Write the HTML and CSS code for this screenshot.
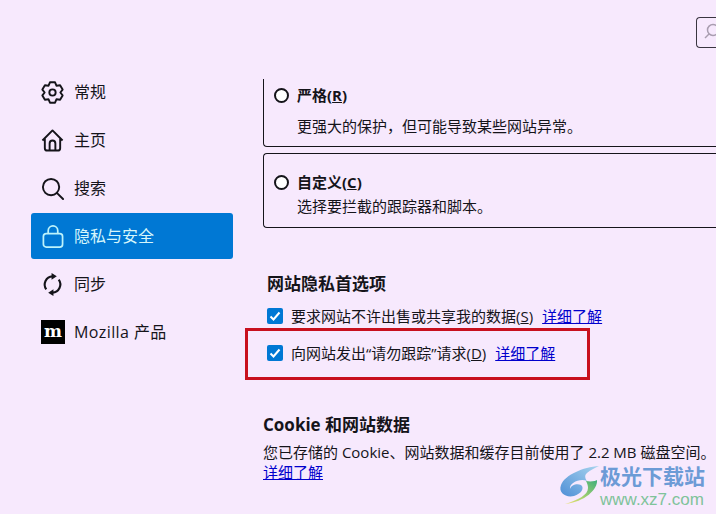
FILE: index.html
```html
<!DOCTYPE html>
<html lang="zh-CN">
<head>
  <meta charset="UTF-8" />
  <title>设置</title>
  <link rel="stylesheet" href="styles.css">
</head>
<body>
  <div class="topbar">
    <div class="search-box">
      <svg width="14" height="20" viewBox="0 0 14 20" fill="none" stroke="#a99db0" stroke-width="1.5"><circle cx="11" cy="7" r="5.5"/><path d="M7 11l-4 4"/></svg>
    </div>
  </div>

  <div class="layout">
    <nav class="sidebar">
      <a class="nav-item">
        <svg class="icon" viewBox="0 0 24 24" fill="none" stroke="#15141a" stroke-width="2" stroke-linejoin="round"><path d="M16.100 4.900L14.660 1.330H9.340L7.900 4.900 4.090 4.360 1.430 8.970 3.800 12 1.430 15.030 4.090 19.640 7.900 19.100 9.340 22.670H14.660L16.100 19.100 19.910 19.640 22.570 15.030 20.200 12 22.570 8.970 19.910 4.360z"/><circle cx="12" cy="12" r="3.300"/></svg>
        <span>常规</span>
      </a>
      <a class="nav-item">
        <svg class="icon" viewBox="0 0 24 24" fill="none" stroke="#15141a" stroke-width="2" stroke-linejoin="round"><path d="M1.500 12L12 1.500 22.500 12M4 9.500V20a2.500 2.500 0 0 0 2.500 2.500h11A2.500 2.500 0 0 0 20 20V9.500"/><path d="M9 22.500V15a3 3 0 0 1 6 0v7.500"/></svg>
        <span>主页</span>
      </a>
      <a class="nav-item">
        <svg class="icon" viewBox="0 0 24 24" fill="none" stroke="#15141a" stroke-width="2" stroke-linecap="round"><circle cx="10.500" cy="10.500" r="8.500"/><path d="M16.500 16.500l6.500 6.500"/></svg>
        <span>搜索</span>
      </a>
      <a class="nav-item active">
        <svg class="icon" viewBox="0 0 24 24" fill="none" stroke="#bdf3fb" stroke-width="1.800"><rect x="2.500" y="9" width="20" height="14" rx="3"/><path d="M7.500 9V6a5 5 0 0 1 10 0v3"/></svg>
        <span>隐私与安全</span>
      </a>
      <a class="nav-item">
        <svg class="icon" viewBox="0 0 24 24" fill="none" stroke="#15141a" stroke-width="2.200"><path d="M5.500 17A8.500 8.500 0 0 1 12 3.500"/><path d="M18.500 7A8.500 8.500 0 0 1 12 20.500"/><path d="M11 0l5.500 3.500L11 7z" fill="#15141a" stroke="none"/><path d="M13 24l-5.500-3.500L13 17z" fill="#15141a" stroke="none"/></svg>
        <span>同步</span>
      </a>
      <a class="nav-item">
        <span class="moz-logo">m</span>
        <span class="moz-name">Mozilla 产品</span>
      </a>
    </nav>

    <main class="content">
      <div class="card card-clipped">
        <div class="radio-row"><span class="radio"></span><b>严格(<u>R</u>)</b></div>
        <p class="card-desc strict-desc">更强大的保护，但可能导致某些网站异常。</p>
      </div>
      <div class="card card-custom">
        <div class="radio-row"><span class="radio"></span><b>自定义(<u>C</u>)</b></div>
        <p class="card-desc">选择要拦截的跟踪器和脚本。</p>
      </div>

      <section class="prefs">
        <h3>网站隐私首选项</h3>
        <div class="check-row">
          <span class="check"><svg width="12" height="12" viewBox="0 0 12 12" fill="none" stroke="#fff" stroke-width="2"><path d="M1.500 6.500l3 3 6-7"/></svg></span>
          <span>要求网站不许出售或共享我的数据(<u>S</u>)</span>
          <a class="link">详细了解</a>
        </div>
        <div class="check-row">
          <span class="check"><svg width="12" height="12" viewBox="0 0 12 12" fill="none" stroke="#fff" stroke-width="2"><path d="M1.500 6.500l3 3 6-7"/></svg></span>
          <span>向网站发出“请勿跟踪”请求(<u>D</u>)</span>
          <a class="link">详细了解</a>
        </div>
      </section>

      <section class="cookies">
        <h2>Cookie 和网站数据</h2>
        <p>您已存储的 Cookie、网站数据和缓存目前使用了 2.2 MB 磁盘空间。</p>
        <a class="link">详细了解</a>
      </section>
    </main>
  </div>

  <div class="red-box"></div>

  <div class="watermark">
    <svg class="wm-logo" width="44" height="42" viewBox="0 0 44 42">
      <defs>
        <linearGradient id="wmBlue" x1="1" y1="0" x2="0" y2="1"><stop offset="0" stop-color="#a8d4ee"/><stop offset="1" stop-color="#4f8fd6"/></linearGradient>
        <linearGradient id="wmGreen" x1="1" y1="0" x2="0" y2="1"><stop offset="0" stop-color="#3fae7c"/><stop offset="0.6" stop-color="#a9d26e"/><stop offset="1" stop-color="#f3e27a"/></linearGradient>
      </defs>
      <path d="M41 2C25 3 7 11 3 21c-3 8 5 13 13 11 7-2 11-8 7-11-4-2-10 0-11 4-1-6 10-11 17-8 0 0-4-5 0-8 3-3 8-5 12-7z" fill="url(#wmBlue)"/>
      <path d="M28 17c5 1 10 0 11-1 1 9-12 22-32 24 13-4 23-9 23-16 0-3-1-5-2-7z" fill="url(#wmGreen)"/>
    </svg>
    <div class="wm-text">
      <span class="wm-title">极光下载站</span>
      <span class="wm-url">www.xz7.com</span>
    </div>
  </div>
</body>
</html>
```

FILE: styles.css
```css
html, body {
  height: 100%;
}

body {
  position: relative;
  margin: 0;
  overflow: hidden;
  background-color: #f7e9fd;
  color: #15141a;
  font-family: "Open Sans", "Noto Sans CJK SC", sans-serif;
  font-size: 15px;
  line-height: 20px;
}

.topbar {
  height: 17px;
  padding: 17px 0 0 696px;
}

.search-box {
  box-sizing: border-box;
  width: 20px;
  height: 31px;
  border: 1px solid #3a3540;
  border-right: 0;
  border-radius: 4px 0 0 4px;
  padding: 5px 0 0 5px;
}

.layout {
  display: flex;
  padding-top: 35px;
}

.sidebar {
  flex: none;
  width: 202px;
  margin-left: 31px;
  display: flex;
  flex-direction: column;
  gap: 2px;
}

.nav-item {
  display: flex;
  align-items: center;
  gap: 10px;
  height: 46px;
  padding-left: 10px;
  border-radius: 3px;
  font-size: 16px;
}

.nav-item.active {
  background-color: #0078d4;
  color: #d6f6fb;
}

.icon {
  flex: none;
  width: 23px;
  height: 23px;
}

.moz-logo {
  flex: none;
  width: 24px;
  height: 24px;
  margin-right: -1px;
  background: #000;
  color: #fff;
  font-family: "DejaVu Serif", serif;
  font-size: 17px;
  font-weight: 700;
  line-height: 22px;
  text-align: center;
}

.moz-name {
  letter-spacing: 0.4px;
}

.content {
  flex: 1;
  min-width: 0;
  margin-left: 30px;
  margin-top: 10px;
}

.card {
  box-sizing: border-box;
  border: 1px solid #15141a;
  border-right: 0;
  border-radius: 4px 0 0 4px;
}

.card-clipped {
  height: 68px;
  border-top: 0;
  border-top-left-radius: 0;
  padding-top: 6px;
}

.card-custom {
  height: 75px;
  margin-top: 6px;
  padding-top: 18px;
}

.radio-row {
  display: flex;
  align-items: center;
  gap: 8px;
  padding-left: 10px;
}

.radio {
  flex: none;
  box-sizing: border-box;
  width: 15px;
  height: 15px;
  border: 2px solid #15141a;
  border-radius: 50%;
  background: #fff;
}

.card-desc {
  margin: 4px 0 0 33px;
}

.strict-desc {
  margin-top: 11px;
}

.prefs {
  margin-top: 44px;
  padding-left: 4px;
}

.prefs h3 {
  margin: 0 0 8px;
  font-size: 17px;
  font-weight: 700;
  line-height: 24px;
}

.check-row {
  display: flex;
  align-items: center;
  height: 24px;
  margin-bottom: 13px;
}

.check {
  flex: none;
  display: flex;
  align-items: center;
  justify-content: center;
  width: 16px;
  height: 16px;
  margin-right: 8px;
  border-radius: 2px;
  background-color: #0078d4;
}

.link {
  margin-left: 9px;
  color: #0000cc;
  text-decoration: underline;
}

.cookies {
  margin-top: 48px;
}

.cookies h2 {
  margin: 0 0 5px;
  font-size: 17px;
  font-weight: 700;
  line-height: 24px;
}

.cookies p {
  margin: 0;
  white-space: nowrap;
}

.cookies .link {
  margin-left: 0;
}

/* annotation drawn over the screenshot */
.red-box {
  position: absolute;
  left: 245px;
  top: 328px;
  width: 339px;
  height: 46px;
  border: 3px solid #c8101e;
}

.watermark {
  position: absolute;
  left: 558px;
  top: 464px;
  display: flex;
  align-items: flex-start;
}

.wm-logo {
  flex: none;
  margin-right: -2px;
}

.wm-text {
  display: flex;
  flex-direction: column;
}

.wm-title {
  color: #6c9bd6;
  font-size: 21px;
  font-weight: 700;
  line-height: 24px;
}

.wm-url {
  margin-top: 2px;
  color: #7fc39a;
  font-family: "Liberation Sans", sans-serif;
  font-size: 17px;
  line-height: 20px;
}
```
